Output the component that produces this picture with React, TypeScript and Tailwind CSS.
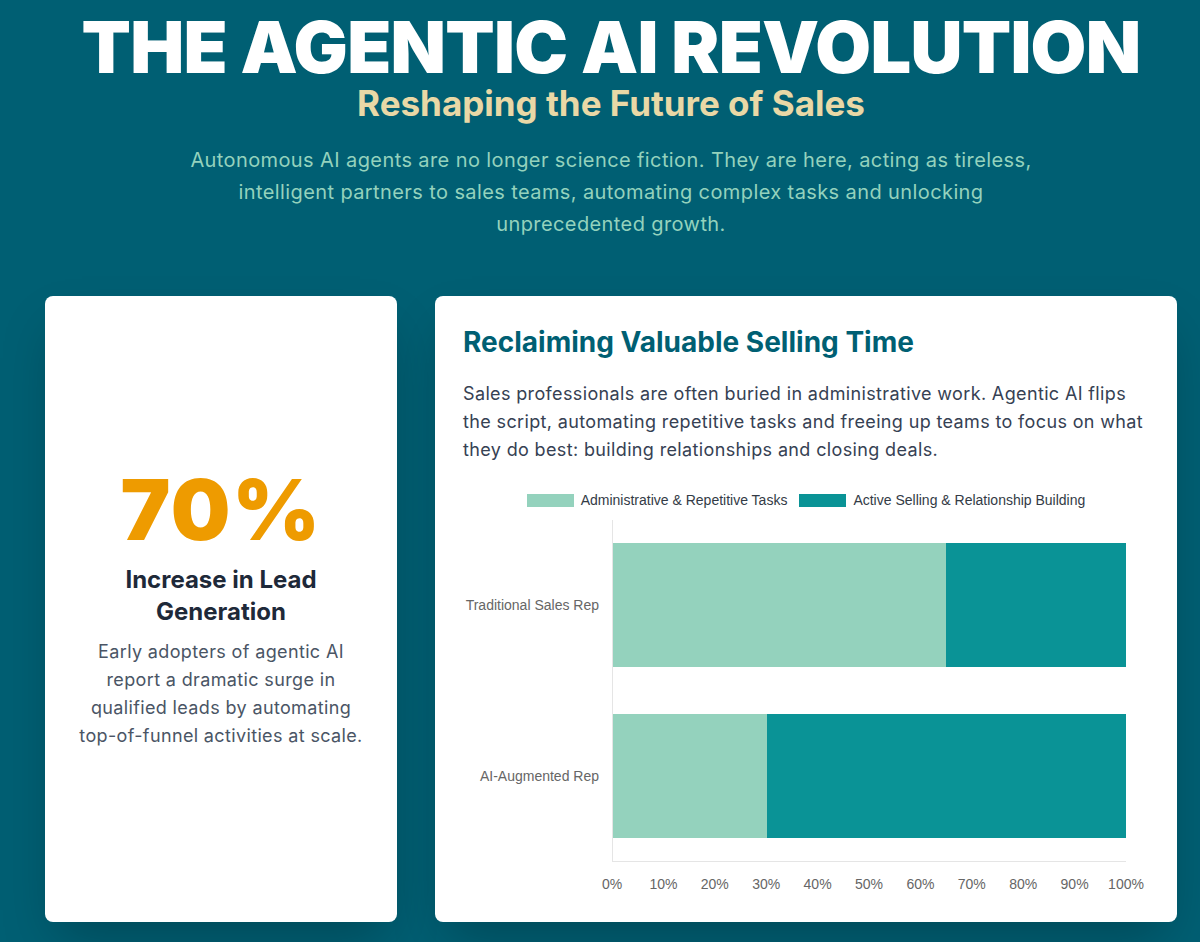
const ADMIN = '#94d2bd'
const ACTIVE = '#0a9396'

const rows = [
  { label: 'Traditional Sales Rep', admin: 65 },
  { label: 'AI-Augmented Rep', admin: 30 },
]

const ticks = [0, 10, 20, 30, 40, 50, 60, 70, 80, 90, 100]

function StatCard() {
  return (
    <div className="flex flex-col justify-center items-center rounded-lg bg-white shadow-2xl p-8 text-center">
      <div className="text-[84px] leading-none font-black tracking-[0.02em] text-[#ee9b00]">70%</div>
      <h3 className="mt-3 text-2xl font-bold text-gray-800">Increase in Lead Generation</h3>
      <p className="mt-2.5 text-lg leading-7 tracking-[0.02em] text-gray-600">
        Early adopters of agentic AI report a dramatic surge in qualified leads by automating top-of-funnel activities at scale.
      </p>
    </div>
  )
}

function SellingChart() {
  return (
    <div className="mt-6 h-[406px] flex flex-col font-['Liberation_Sans',Arial,sans-serif] text-[14px]">
      <div className="h-6 flex items-center justify-center gap-3 text-[#333b46]">
        <div className="flex items-center gap-[7px]">
          <span className="w-[47px] h-[13px]" style={{ background: ADMIN }} />
          <span>Administrative &amp; Repetitive Tasks</span>
        </div>
        <div className="flex items-center gap-[7px]">
          <span className="w-[47px] h-[13px]" style={{ background: ACTIVE }} />
          <span>Active Selling &amp; Relationship Building</span>
        </div>
      </div>

      <div className="mt-2 h-[342px] flex">
        <div className="w-[149px] flex flex-col text-[#666]">
          {rows.map(r => (
            <div key={r.label} className="flex-1 flex items-center justify-end pr-[13px]">{r.label}</div>
          ))}
        </div>
        <div className="w-[514px] flex flex-col border-l border-b border-[#e5e5e5]">
          {rows.map(r => (
            <div key={r.label} className="flex-1 flex items-center">
              <div className="h-[124px] w-full flex">
                <div style={{ width: `${r.admin}%`, background: ADMIN }} />
                <div className="flex-1" style={{ background: ACTIVE }} />
              </div>
            </div>
          ))}
        </div>
      </div>

      <div className="mt-3 flex">
        <div className="w-[149px]" />
        <div className="relative w-[514px] h-5 text-[#666]">
          {ticks.map(t => (
            <span key={t} className="absolute top-0 -translate-x-1/2 leading-5" style={{ left: `${t}%` }}>{t}%</span>
          ))}
        </div>
      </div>
    </div>
  )
}

export default function App() {
  return (
    <div className="min-h-screen bg-[#005f73] pl-[45px] pr-[23px] pt-[11px] pb-5 font-['Inter',sans-serif]">
      <header className="text-center">
        <h1 className="text-7xl leading-none font-black tracking-[-0.01em] text-white">THE AGENTIC AI REVOLUTION</h1>
        <h2 className="mt-[2px] text-[35px] leading-9 font-bold text-[#e9d8a6]">Reshaping the Future of Sales</h2>
        <p className="mt-[23px] mx-auto max-w-[870px] text-xl leading-8 tracking-[0.02em] text-[#94d2bd]">
          Autonomous AI agents are no longer science fiction. They are here, acting as tireless, intelligent partners to sales teams, automating complex tasks and unlocking unprecedented growth.
        </p>
      </header>

      <main className="mt-14 grid grid-cols-3 gap-[38px]">
        <StatCard />
        <section className="col-span-2 rounded-lg bg-white shadow-2xl p-7">
          <h2 className="text-[28px] leading-9 font-bold text-[#005f73]">Reclaiming Valuable Selling Time</h2>
          <p className="mt-5 text-lg leading-7 tracking-[0.02em] text-gray-700">
            Sales professionals are often buried in administrative work. Agentic AI flips the script, automating repetitive tasks and freeing up teams to focus on what they do best: building relationships and closing deals.
          </p>
          <SellingChart />
        </section>
      </main>
    </div>
  )
}
